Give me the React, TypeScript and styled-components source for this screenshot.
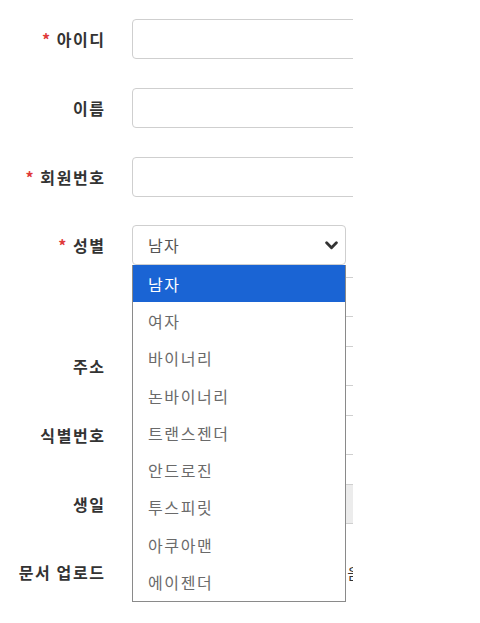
import React from 'react';
import styled, { createGlobalStyle } from 'styled-components';

const GlobalStyle = createGlobalStyle`
  html, body {
    margin: 0;
    padding: 0;
    background: #ffffff;
  }
  body {
    font-family: "Noto Sans CJK KR", "Noto Sans", sans-serif;
  }
`;

const genders = ['남자', '여자', '바이너리', '논바이너리', '트랜스젠더', '안드로진', '투스피릿', '아쿠아맨', '에이젠더'];

const App = () => {
    return (
        <>
            <GlobalStyle />
            <Page>
                <Form>
                    <Row $top={19}>
                        <Label><Star>*</Star>아이디</Label>
                        <TextInput />
                    </Row>
                    <Row $top={29}>
                        <Label>이름</Label>
                        <TextInput />
                    </Row>
                    <Row $top={29}>
                        <Label><Star>*</Star>회원번호</Label>
                        <TextInput />
                    </Row>
                    <Row $top={28}>
                        <Label><Star>*</Star>성별</Label>
                        <SelectBox>
                            <span>남자</span>
                            <Chevron viewBox="0 0 12 8">
                                <path d="M1.5 1.5 L6 6 L10.5 1.5" />
                            </Chevron>
                        </SelectBox>
                    </Row>
                    <Row $top={12}>
                        <Label />
                        <TextInput />
                    </Row>
                    <Row $top={29}>
                        <Label>주소</Label>
                        <TextInput />
                    </Row>
                    <Row $top={29}>
                        <Label>식별번호</Label>
                        <TextInput />
                    </Row>
                    <Row $top={29}>
                        <Label>생일</Label>
                        <TextInput $disabled />
                    </Row>
                    <Row $top={28}>
                        <Label>문서 업로드</Label>
                        <FileText>파일 선택 선택된 파일 없음</FileText>
                    </Row>
                </Form>
                <OptionList>
                    {genders.map((g, i) => (
                        <Option key={g} $active={i === 0}>{g}</Option>
                    ))}
                </OptionList>
            </Page>
        </>
    );
}

const Page = styled.div`
    position: relative;
    width: 480px;
    height: 623px;
    overflow: hidden;
`

const Form = styled.div`
    width: 353px;
    overflow: hidden;
    display: flex;
    flex-direction: column;
`

const Row = styled.div<{ $top: number }>`
    display: grid;
    grid-template-columns: 104px 300px;
    column-gap: 28px;
    align-items: center;
    height: 40px;
    margin-top: ${p => p.$top}px;
`

const Label = styled.div`
    text-align: right;
    font-size: 16px;
    font-weight: 700;
    letter-spacing: 1.6px;
    margin-right: -1.6px;
    color: #333333;
    white-space: nowrap;
`

const Star = styled.span`
    color: #e03a3a;
    margin-right: 5px;
`

const TextInput = styled.div<{ $disabled?: boolean }>`
    box-sizing: border-box;
    height: 40px;
    border: 1px solid #cfcfcf;
    border-radius: 4px;
    background: ${p => (p.$disabled ? '#ececec' : '#ffffff')};
`

const SelectBox = styled.div`
    box-sizing: border-box;
    width: 214px;
    height: 40px;
    border: 1px solid #cfcfcf;
    border-radius: 4px;
    background: #ffffff;
    display: flex;
    align-items: center;
    justify-content: space-between;
    padding: 0 7px 0 15px;
    font-size: 16px;
    letter-spacing: 1.4px;
    color: #555555;
`

const Chevron = styled.svg`
    width: 13px;
    height: 9px;
    fill: none;
    stroke: #333333;
    stroke-width: 2.6;
    stroke-linecap: round;
    stroke-linejoin: round;
`

const FileText = styled.div`
    width: 230px;
    text-align: right;
    font-size: 15px;
    letter-spacing: 1px;
    color: #333333;
    white-space: nowrap;
`

const OptionList = styled.div`
    position: absolute;
    top: 265px;
    left: 132px;
    width: 214px;
    box-sizing: border-box;
    border: 1px solid #8a8a8a;
    border-top: none;
    background: #ffffff;
    display: flex;
    flex-direction: column;
`

const Option = styled.div<{ $active?: boolean }>`
    height: 37.3px;
    display: flex;
    align-items: center;
    padding-left: 15px;
    font-size: 16px;
    letter-spacing: 1.6px;
    color: ${p => (p.$active ? '#ffffff' : '#6a6a6a')};
    background: ${p => (p.$active ? '#1a64d4' : '#ffffff')};
`

export default App;
